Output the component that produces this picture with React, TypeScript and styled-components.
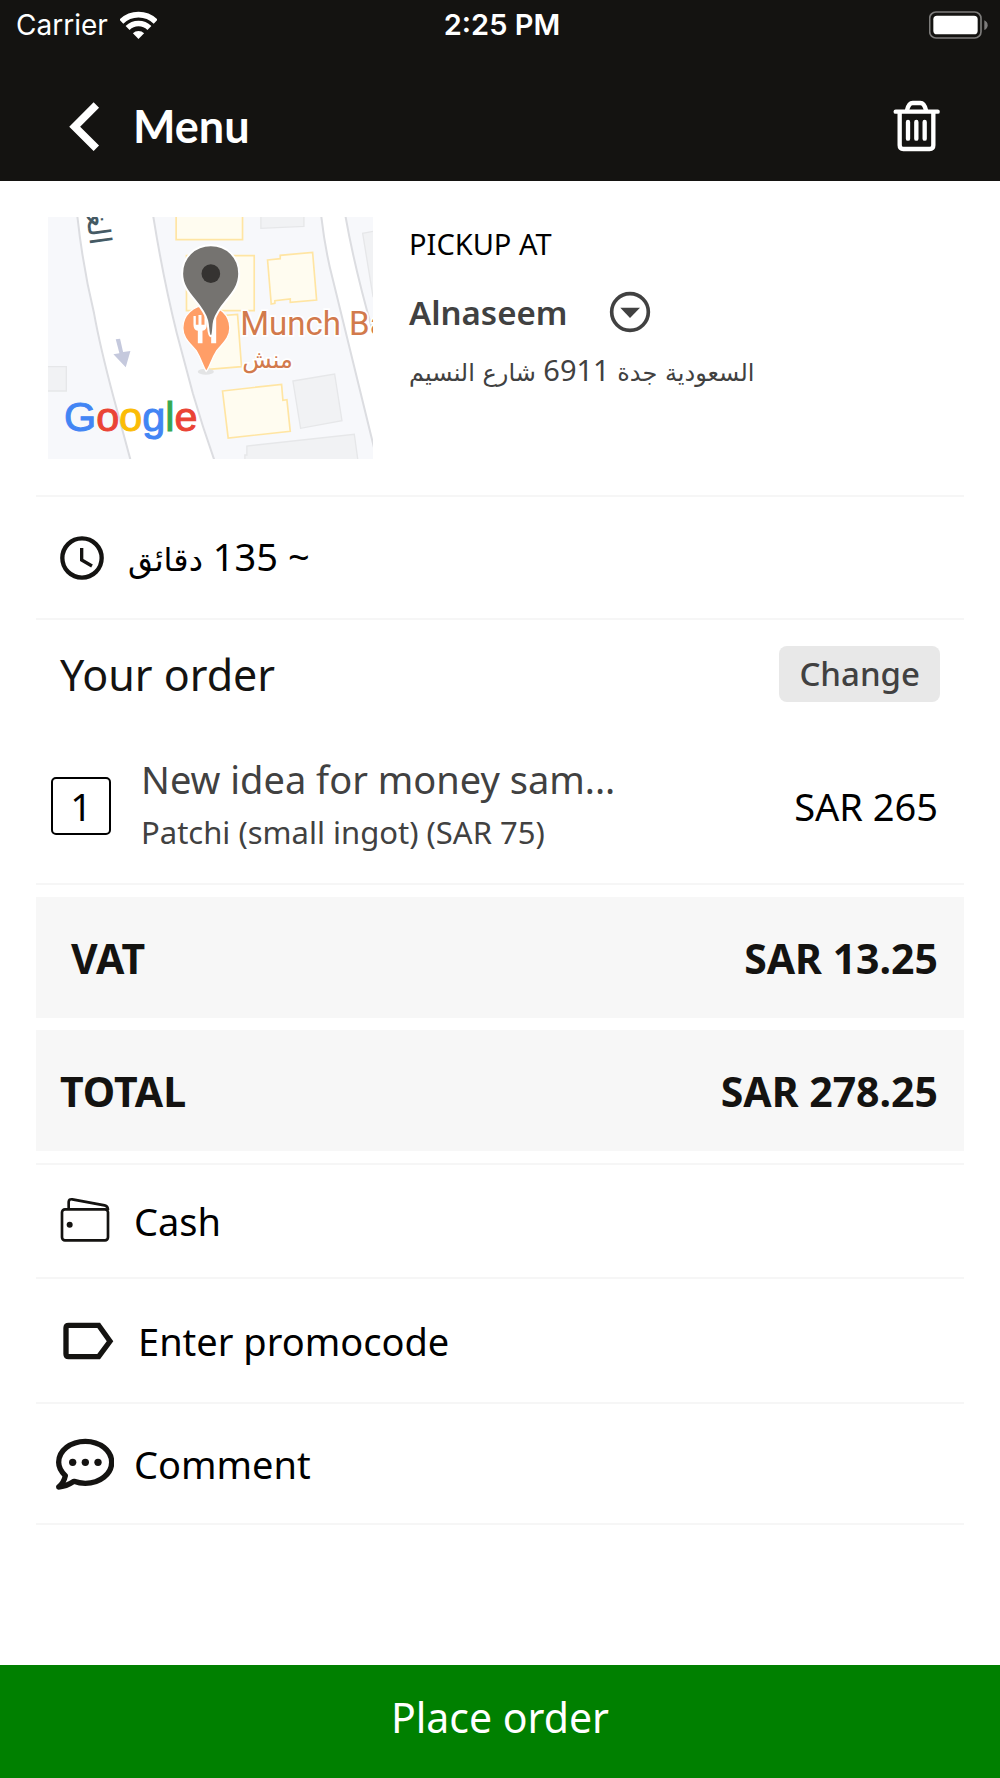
import React from "react";
import styled, { createGlobalStyle } from "styled-components";

const ink = "#141311";
const soft = "#414141";
const line = "#f6f6f6";

const GlobalStyle = createGlobalStyle`
  *, *::before, *::after { box-sizing: border-box; }
  body {
    margin: 0;
    background: #fff;
    color: #000;
    font-family: "Noto Sans", "DejaVu Sans", sans-serif;
  }
  button { font: inherit; color: inherit; border: 0; background: none; padding: 0; cursor: pointer; }
  h1, h2, p, ul, dl, dd { margin: 0; padding: 0; }
  svg { display: block; flex: none; }
`;

const Screen = styled.div`
  display: flex;
  flex-direction: column;
  min-height: 100vh;
`;

const Header = styled.header`
  background: ${ink};
  color: #fff;
`;

const StatusBar = styled.div`
  display: grid;
  grid-template-columns: 1fr auto 1fr;
  align-items: center;
  height: 50px;
  padding: 0 12px 0 16px;
  font-family: Inter, sans-serif;
  font-size: 28px;
  line-height: 34px;
`;

const Carrier = styled.div`
  display: flex;
  align-items: center;
  gap: 12px;
`;

const Clock = styled.div`
  font-size: 29px;
  font-weight: 600;
`;

const Battery = styled.div`
  justify-self: end;
`;

const NavBar = styled.nav`
  display: flex;
  align-items: center;
  justify-content: space-between;
  height: 131px;
  padding: 21px 60px 0 69px;
`;

const BackButton = styled.button`
  display: flex;
  align-items: center;
  gap: 33px;
  font-family: Lato, sans-serif;
  font-size: 45px;
  font-weight: 700;
  line-height: 52px;
`;

const Content = styled.main`
  padding: 0 36px;
`;

const Pickup = styled.section`
  display: flex;
  gap: 36px;
  padding: 36px 12px;
  border-bottom: 2px solid ${line};
`;

const PickupInfo = styled.div`
  flex: 1;
  min-width: 0;
`;

const PickupLabel = styled.p`
  font-size: 29px;
  line-height: 54px;
`;

const BranchButton = styled.button`
  display: flex;
  align-items: center;
  gap: 42px;
  height: 82px;
  color: ${soft};
  font-size: 33px;
  font-weight: 600;
`;

const Address = styled.p`
  color: ${soft};
  font-size: 29px;
  line-height: 34px;
  text-align: left;
`;

const Arabic = styled.span<{ $size: number }>`
  font-family: "DejaVu Sans", sans-serif;
  font-size: ${(p) => p.$size}px;
`;

const TimeRow = styled.section`
  display: flex;
  align-items: center;
  gap: 24px;
  height: 123px;
  padding: 0 24px;
  border-bottom: 2px solid ${line};
  font-size: 38px;
  line-height: 52px;
`;

const OrderHead = styled.div`
  display: flex;
  align-items: center;
  justify-content: space-between;
  height: 108px;
  padding: 0 24px;
`;

const OrderTitle = styled.h2`
  color: ${ink};
  font-size: 43px;
  font-weight: 400;
`;

const ChangeButton = styled.button`
  height: 56px;
  padding: 0 20px;
  border-radius: 8px;
  background: #e8e8e8;
  color: ${soft};
  font-size: 33px;
  font-weight: 500;
  line-height: 56px;
`;

const Item = styled.div`
  display: flex;
  align-items: center;
  gap: 28px;
  height: 157px;
  padding: 0 26px 0 15px;
  border-bottom: 2px solid ${line};
  font-size: 38px;
`;

const Quantity = styled.span`
  display: flex;
  flex: none;
  align-items: center;
  justify-content: center;
  width: 60px;
  height: 58px;
  border: 2px solid #000;
  border-radius: 5px;
`;

const ItemInfo = styled.div`
  flex: 1;
  min-width: 0;
  padding-left: 2px;
  color: ${soft};
  line-height: 53px;
`;

const ItemOption = styled.p`
  font-size: 31px;
`;

const Totals = styled.dl`
  display: grid;
  gap: 12px;
  padding: 12px 0;
`;

const TotalRow = styled.div<{ $indent: number }>`
  display: flex;
  align-items: center;
  justify-content: space-between;
  height: 121px;
  padding: 0 26px 0 ${(p) => p.$indent}px;
  background: #f7f7f7;
  color: ${ink};
  font-size: 41px;
  font-weight: 700;
`;

const Options = styled.ul`
  list-style: none;
  border-top: 2px solid ${line};
`;

const OptionButton = styled.button<{ $height: number; $indent: number }>`
  display: flex;
  align-items: center;
  gap: 20px;
  width: 100%;
  height: ${(p) => p.$height}px;
  padding: 0 ${(p) => p.$indent}px;
  border-bottom: 2px solid ${line};
  font-size: 38px;
`;

const IconSlot = styled.span`
  display: flex;
  flex: none;
  justify-content: center;
  width: 58px;
`;

const PlaceOrder = styled.button`
  height: 113px;
  margin-top: auto;
  padding-bottom: 10px;
  background: #008000;
  color: #fff;
  font-size: 41px;
`;

const WifiIcon = () => (
  <svg width="37" height="28" viewBox="360 28 112 84" fill="none" stroke="#fff" strokeWidth="17" aria-hidden="true">
    <path d="M364 60A74 74 0 0 1 468 60" />
    <path d="M383 79A47 47 0 0 1 449 79" />
    <path d="M416 112L399 95A24 24 0 0 1 433 95Z" fill="#fff" stroke="none" />
  </svg>
);

const BatteryIcon = () => (
  <svg width="59" height="28" viewBox="1285 30 177 84" aria-label="Battery full">
    <rect x="1287" y="33" width="154" height="78" rx="19" fill="none" stroke="#7d7c7b" strokeWidth="5" />
    <rect x="1298" y="44" width="133" height="56" rx="11" fill="#fff" />
    <path d="M1451 58Q1461 63 1461 72.500Q1461 82 1451 87Z" fill="#7d7c7b" />
  </svg>
);

const BackIcon = () => (
  <svg width="31" height="49" viewBox="205 306 93 147" aria-hidden="true">
    <path d="M287 315L222 380L287 445" fill="none" stroke="#fff" strokeWidth="23" />
  </svg>
);

const TrashIcon = () => (
  <svg width="47" height="52" viewBox="1179 302 141 156" fill="none" stroke="#fff" strokeWidth="13" strokeLinecap="round" aria-hidden="true">
    <path d="M1187 337H1313" />
    <path d="M1221 333Q1226 311 1238 311H1261Q1273 311 1278 333" />
    <path d="M1199 340V438Q1199 449 1210 449H1289Q1300 449 1300 438V340" />
    <path d="M1224 368V418M1249 368V418M1274 368V418" />
  </svg>
);

const DropIcon = () => (
  <svg width="42" height="42" viewBox="658 244 126 126" aria-hidden="true">
    <circle cx="721" cy="307" r="55" fill="none" stroke={soft} strokeWidth="11" />
    <path d="M692 294H751L721 325Z" fill={soft} />
  </svg>
);

const TimeIcon = () => (
  <svg width="44" height="44" viewBox="90 168 132 132" fill="none" stroke={ink} aria-hidden="true">
    <circle cx="156" cy="234" r="59" strokeWidth="13" />
    <path d="M155 204V240L186 258" strokeWidth="10" />
  </svg>
);

const WalletIcon = () => (
  <svg width="50" height="48" viewBox="89 139 150 144" fill="none" stroke={ink} strokeWidth="8" aria-hidden="true">
    <rect x="95" y="176" width="138" height="93" rx="9" />
    <path d="M115 175V154Q116 144 126 146L223 164Q233 166 233 178" />
    <circle cx="118" cy="222" r="9" fill={ink} stroke="none" />
  </svg>
);

const TagIcon = () => (
  <svg width="52" height="38" viewBox="99 512 156 114" aria-hidden="true">
    <path d="M116 522H206L240 570L206 616H116Q108 616 108 608V530Q108 522 116 522Z" fill="none" stroke={ink} strokeWidth="16" />
  </svg>
);

const CommentIcon = () => (
  <svg width="58" height="52" viewBox="77 173 174 156" fill={ink} aria-hidden="true">
    <path
      d="M131 303Q107 319 85 320Q101 306 105 286C92 274 85 260 85 246C85 211 121 183 165 183C209 183 244 211 244 246C244 281 209 309 165 309Q147 309 131 303Z"
      fill="none"
      stroke={ink}
      strokeWidth="16"
      strokeLinejoin="round"
    />
    <circle cx="127" cy="246" r="11" />
    <circle cx="165" cy="246" r="11" />
    <circle cx="203" cy="246" r="11" />
  </svg>
);

const MapPreview = () => (
  <svg width="325" height="242" viewBox="54 51 974 726" preserveAspectRatio="none" role="img" aria-label="Branch location map">
    <rect x="54" y="51" width="974" height="726" fill="#f7f8fb" />
    <g fill="#fff" stroke="#dcdde1" strokeWidth="6">
      <path d="M141 40Q158 200 192 340Q210 440 250 590L304 790H556Q520 690 488 580L440 400Q398 230 368 40Z" />
      <path d="M872 40Q884 150 908 240L1045 800V455Q975 220 944 40Z" />
    </g>
    <g fill="#f1f2f4" stroke="#e6e7e9" strokeWidth="4">
      <path d="M692 40V85L821 79V40Z" />
      <path d="M1040 92L997 100L1028 290H1040Z" />
      <path d="M44 500H109V573H44Z" />
      <path d="M788 543L913 522L935 662L811 685Z" />
      <path d="M644 790V765H650V738L972 703L984 790Z" />
    </g>
    <g fill="#fffcf0" stroke="#ffe5a3" strokeWidth="5">
      <path d="M438 40V119H637V40Z" />
      <path d="M469 167H672V332H469Z" />
      <path d="M712 180L750 176V166L847 157L859 300L780 307V297L734 302V310L723 312Z" />
      <path d="M535 350L622 343L634 500L535 508Z" />
      <path d="M577 573L754 553L758 601L770 599L780 694L594 714Z" />
    </g>
    <path d="M257 418L270 416L279 456L301 453L287 502L250 463L268 460Z" fill="#c5c9dd" />
    <text transform="translate(181 138) rotate(82)" direction="rtl" fill="#455a64" fontFamily="DejaVu Sans, sans-serif" fontSize="90">
      الغـ
    </text>
    <ellipse cx="527" cy="515" rx="24" ry="9" fill="#e3e4e5" />
    <path
      d="M528 514C518 500 516 482 498 452C480 430 458 414 458 384C458 345 490 316 528 316C567 316 599 345 599 384C599 414 578 430 560 452C541 482 540 500 528 514Z"
      fill="#ff9e67"
      stroke="#fff"
      strokeWidth="4"
    />
    <path
      d="M490 348V374Q490 390 503 392V430H517V392Q530 390 530 374V348H523V374H514V345H505V374H497V348ZM543 430V384Q543 350 558 346V430Z"
      fill="#fff"
    />
    <path
      d="M542 409C533 408 536 382 531 362C516 306 456 282 456 221C456 172 494 136 542 136C590 136 627 172 627 221C627 282 568 306 552 362C547 382 551 408 542 409Z"
      fill="#757370"
      stroke="#fff"
      strokeWidth="6"
    />
    <circle cx="542" cy="221" r="28" fill="#353331" />
    <g fill="#d27a4c" stroke="#fff" strokeWidth="10" paintOrder="stroke">
      <text x="630" y="405" fontFamily="Roboto, sans-serif" fontSize="99">
        Munch Ba
      </text>
      <text x="636" y="503" fontFamily="DejaVu Sans, sans-serif" fontSize="72">
        منش
      </text>
    </g>
    <text x="102" y="692" fontFamily="Liberation Sans, sans-serif" fontSize="124" strokeWidth="3">
      <tspan fill="#4285f4" stroke="#4285f4">G</tspan>
      <tspan fill="#ea4335" stroke="#ea4335">o</tspan>
      <tspan fill="#fbbc05" stroke="#fbbc05">o</tspan>
      <tspan fill="#4285f4" stroke="#4285f4">g</tspan>
      <tspan fill="#34a853" stroke="#34a853">l</tspan>
      <tspan fill="#ea4335" stroke="#ea4335">e</tspan>
    </text>
  </svg>
);

const totals = [
  { label: "VAT", amount: "SAR 13.25", indent: 35 },
  { label: "TOTAL", amount: "SAR 278.25", indent: 24 },
];

const options = [
  { label: "Cash", icon: <WalletIcon />, height: 114, indent: 20 },
  { label: "Enter promocode", icon: <TagIcon />, height: 125, indent: 24 },
  { label: "Comment", icon: <CommentIcon />, height: 121, indent: 20 },
];

export default function App() {
  return (
    <Screen>
      <GlobalStyle />
      <Header>
        <StatusBar>
          <Carrier>
            <span>Carrier</span>
            <WifiIcon />
          </Carrier>
          <Clock>2:25 PM</Clock>
          <Battery>
            <BatteryIcon />
          </Battery>
        </StatusBar>
        <NavBar>
          <BackButton type="button">
            <BackIcon />
            Menu
          </BackButton>
          <button type="button" aria-label="Clear order">
            <TrashIcon />
          </button>
        </NavBar>
      </Header>
      <Content>
        <Pickup>
          <MapPreview />
          <PickupInfo>
            <PickupLabel>PICKUP AT</PickupLabel>
            <BranchButton type="button">
              Alnaseem
              <DropIcon />
            </BranchButton>
            <Address dir="rtl">
              <Arabic $size={24}>السعودية جدة</Arabic> 6911 <Arabic $size={24}>شارع النسيم</Arabic>
            </Address>
          </PickupInfo>
        </Pickup>
        <TimeRow>
          <TimeIcon />
          <span dir="rtl">
            ~ 135 <Arabic $size={32}>دقائق</Arabic>
          </span>
        </TimeRow>
        <OrderHead>
          <OrderTitle>Your order</OrderTitle>
          <ChangeButton type="button">Change</ChangeButton>
        </OrderHead>
        <Item>
          <Quantity>1</Quantity>
          <ItemInfo>
            <p>New idea for money sam...</p>
            <ItemOption>Patchi (small ingot) (SAR 75)</ItemOption>
          </ItemInfo>
          <span>SAR 265</span>
        </Item>
        <Totals>
          {totals.map((t) => (
            <TotalRow key={t.label} $indent={t.indent}>
              <dt>{t.label}</dt>
              <dd>{t.amount}</dd>
            </TotalRow>
          ))}
        </Totals>
        <Options>
          {options.map((o) => (
            <li key={o.label}>
              <OptionButton type="button" $height={o.height} $indent={o.indent}>
                <IconSlot>{o.icon}</IconSlot>
                {o.label}
              </OptionButton>
            </li>
          ))}
        </Options>
      </Content>
      <PlaceOrder type="button">Place order</PlaceOrder>
    </Screen>
  );
}
